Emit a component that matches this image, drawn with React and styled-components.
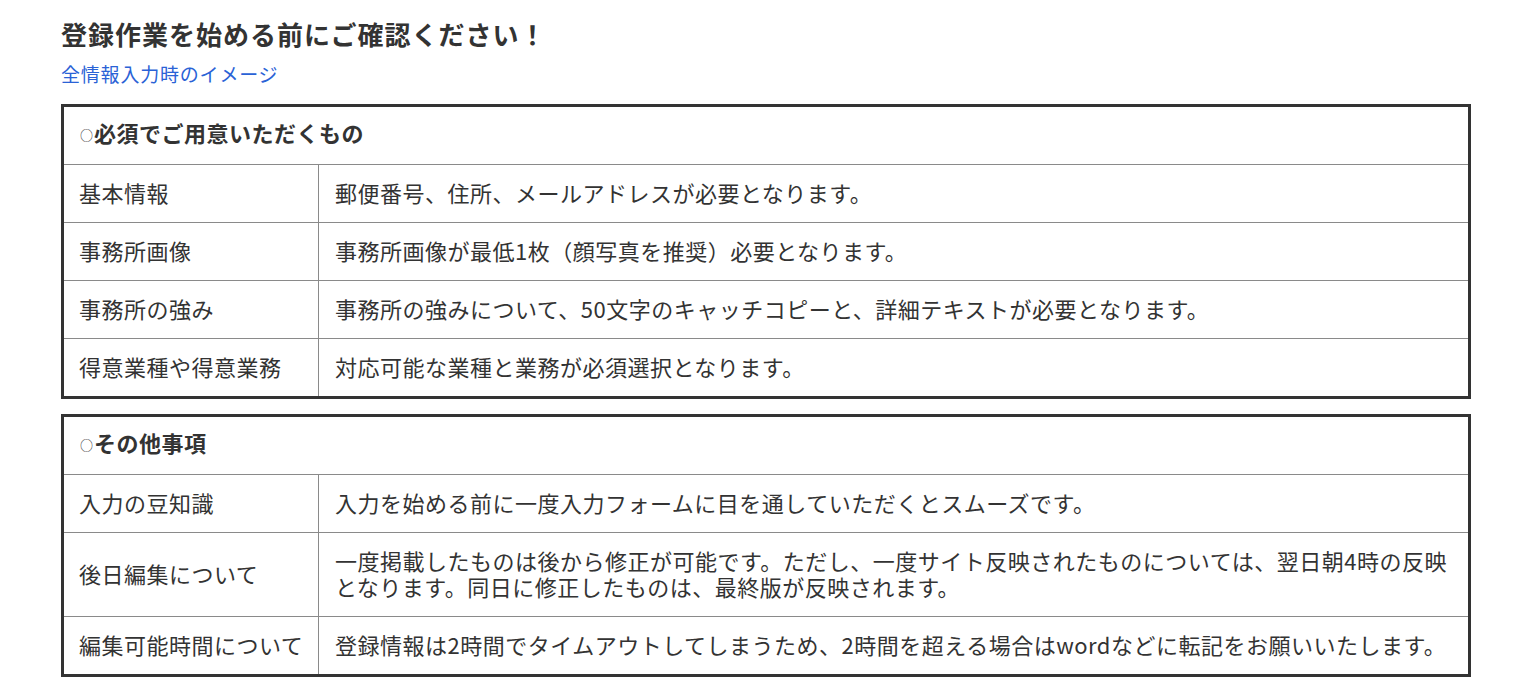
import React from "react";
import styled, { createGlobalStyle } from "styled-components";

const GlobalStyle = createGlobalStyle`
  body {
    margin: 0;
    background: #fff;
    font-family: "Noto Sans CJK JP", "Noto Sans", sans-serif;
    color: #333;
  }
`;

const Page = styled.main`
  padding: 16px 0 10px 61px;
  width: 1410px;
`;

const Title = styled.h1`
  margin: 0;
  font-size: 26px;
  line-height: 36px;
  font-weight: 700;
  letter-spacing: 1px;
  color: #333;
`;

const ImageLink = styled.a`
  display: inline-block;
  margin-top: 9px;
  font-size: 19px;
  line-height: 26px;
  letter-spacing: 0.8px;
  color: #2a62d6;
  text-decoration: none;
`;

const InfoTable = styled.table`
  width: 100%;
  margin-top: ${(p) => (p.$first ? "17px" : "15px")};
  border-collapse: collapse;
  table-layout: fixed;
  border: 3px solid #333;
  font-size: 22px;
  line-height: 26px;
  letter-spacing: 0.5px;
  color: #333;
`;

const LabelCol = styled.col`
  width: 256px;
`;

const HeadCell = styled.th`
  text-align: left;
  font-weight: 700;
  padding: 12px 16px 16px;
  border-bottom: 1px solid #8a8a8a;
`;

const Mark = styled.span`
  font-weight: 400;
  font-size: 13px;
  letter-spacing: 0;
  margin-right: 1px;
  vertical-align: 2px;
`;

const LabelCell = styled.td`
  padding: 14px 15px 17px;
  border-right: 1px solid #8a8a8a;
  border-bottom: 1px solid #8a8a8a;
  vertical-align: middle;
  white-space: nowrap;
`;

const TextCell = styled.td`
  padding: 14px 16px 17px;
  border-bottom: 1px solid #8a8a8a;
  vertical-align: middle;
`;

const required = [
  ["基本情報", "郵便番号、住所、メールアドレスが必要となります。"],
  ["事務所画像", "事務所画像が最低1枚（顔写真を推奨）必要となります。"],
  ["事務所の強み", "事務所の強みについて、50文字のキャッチコピーと、詳細テキストが必要となります。"],
  ["得意業種や得意業務", "対応可能な業種と業務が必須選択となります。"],
];

const others = [
  ["入力の豆知識", "入力を始める前に一度入力フォームに目を通していただくとスムーズです。"],
  [
    "後日編集について",
    "一度掲載したものは後から修正が可能です。ただし、一度サイト反映されたものについては、翌日朝4時の反映となります。同日に修正したものは、最終版が反映されます。",
  ],
  [
    "編集可能時間について",
    "登録情報は2時間でタイムアウトしてしまうため、2時間を超える場合はwordなどに転記をお願いいたします。",
  ],
];

function Section({ title, rows, first }) {
  return (
    <InfoTable $first={first}>
      <colgroup>
        <LabelCol />
        <col />
      </colgroup>
      <thead>
        <tr>
          <HeadCell colSpan={2}>
            <Mark>○</Mark>
            {title}
          </HeadCell>
        </tr>
      </thead>
      <tbody>
        {rows.map(([label, text]) => (
          <tr key={label}>
            <LabelCell>{label}</LabelCell>
            <TextCell>{text}</TextCell>
          </tr>
        ))}
      </tbody>
    </InfoTable>
  );
}

export default function App() {
  return (
    <>
      <GlobalStyle />
      <Page>
        <Title>登録作業を始める前にご確認ください！</Title>
        <ImageLink href="#">全情報入力時のイメージ</ImageLink>
        <Section title="必須でご用意いただくもの" rows={required} first />
        <Section title="その他事項" rows={others} />
      </Page>
    </>
  );
}
